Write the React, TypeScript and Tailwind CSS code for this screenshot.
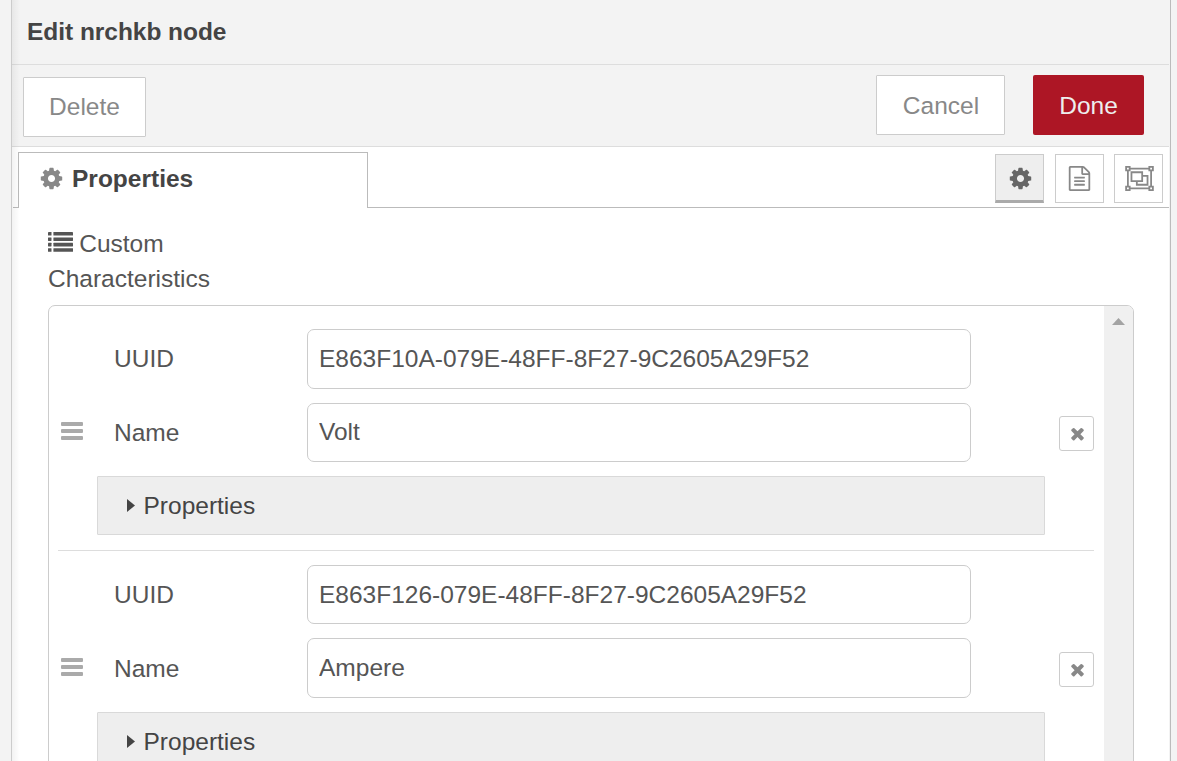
import React from "react";

type IconProps = { className?: string };

function CogIcon({ className }: IconProps) {
  return (
    <svg viewBox="0 0 1792 1792" fill="currentColor" className={className}>
      <path d="M1152 896q0-106-75-181t-181-75-181 75-75 181 75 181 181 75 181-75 75-181zm512-109v222q0 12-8 23t-20 13l-185 28q-19 54-39 91 35 50 107 138 10 12 10 25t-9 23q-27 37-99 108t-94 71q-12 0-26-9l-138-108q-44 23-91 38-16 136-29 186-7 28-36 28h-222q-14 0-24.500-8.500t-11.500-21.500l-28-184q-49-16-90-37l-141 107q-10 9-25 9-14 0-25-11-126-114-165-168-7-10-7-23 0-12 8-23 15-21 51-66.500t54-70.500q-27-50-41-99l-183-27q-13-2-21-12.500t-8-23.500v-222q0-12 8-23t19-13l186-28q14-46 39-92-40-57-107-138-10-12-10-24 0-10 9-23 26-36 98.500-107.500t94.500-71.500q13 0 26 10l138 107q44-23 91-38 16-136 29-186 7-28 36-28h222q14 0 24.500 8.500t11.500 21.500l28 184q49 16 90 37l142-107q9-9 24-9 13 0 25 10 129 119 165 170 7 8 7 22 0 12-8 23-15 21-51 66.500t-54 70.500q26 50 41 98l183 28q13 2 21 12.500t8 23.500z" />
    </svg>
  );
}

function FileTextIcon({ className }: IconProps) {
  return (
    <svg viewBox="0 0 1792 1792" fill="currentColor" className={className}>
      <path d="M1596 380q28 28 48 76t20 88v1152q0 40-28 68t-68 28h-1344q-40 0-68-28t-28-68v-1600q0-40 28-68t68-28h896q40 0 88 20t76 48zm-444-244v376h376q-10-29-22-41l-313-313q-12-12-41-22zm384 1528v-1024h-416q-40 0-68-28t-28-68v-416h-768v1536h1280zm-1024-864q0-14 9-23t23-9h704q14 0 23 9t9 23v64q0 14-9 23t-23 9h-704q-14 0-23-9t-9-23v-64zm736 224q14 0 23 9t9 23v64q0 14-9 23t-23 9h-704q-14 0-23-9t-9-23v-64q0-14 9-23t23-9h704zm0 256q14 0 23 9t9 23v64q0 14-9 23t-23 9h-704q-14 0-23-9t-9-23v-64q0-14 9-23t23-9h704z" />
    </svg>
  );
}

function ObjectGroupIcon({ className }: IconProps) {
  return (
    <svg viewBox="0 0 2048 1792" fill="none" stroke="currentColor" strokeWidth="128" className={className}>
      <path d="M320 192H1728M320 1600H1728M192 320V1472M1856 320V1472" />
      <path d="M64 64H320V320H64zM1728 64H1984V320H1728zM64 1472H320V1728H64zM1728 1472H1984V1728H1728z" />
      <path d="M448 448H1216V1088H448zM1216 704H1600V1344H832V1088" />
    </svg>
  );
}

function TimesIcon({ className }: IconProps) {
  return (
    <svg viewBox="0 0 1792 1792" fill="currentColor" className={className}>
      <path d="M1490 1322q0 40-28 68l-136 136q-28 28-68 28t-68-28l-294-294-294 294q-28 28-68 28t-68-28l-136-136q-28-28-28-68t28-68l294-294-294-294q-28-28-28-68t28-68l136-136q28-28 68-28t68 28l294 294 294-294q28-28 68-28t68 28l136 136q28 28 28 68t-28 68l-294 294 294 294q28 28 28 68z" />
    </svg>
  );
}

function ListIcon({ className }: IconProps) {
  return (
    <svg viewBox="0 0 25 20" fill="currentColor" className={className}>
      {[0, 5.4, 10.8, 16.2].map((y) => (
        <g key={y}>
          <rect x="0" y={y} width="3.5" height="3.6" rx="0.4" />
          <rect x="5.4" y={y} width="19.6" height="3.6" rx="0.4" />
        </g>
      ))}
    </svg>
  );
}

function BarsIcon({ className }: IconProps) {
  return (
    <svg viewBox="0 0 22 18" fill="currentColor" className={className}>
      <rect x="0" y="0" width="22" height="4" rx="1" />
      <rect x="0" y="7" width="22" height="4" rx="1" />
      <rect x="0" y="14" width="22" height="4" rx="1" />
    </svg>
  );
}

function Characteristic({ uuid, name, second }: { uuid: string; name: string; second?: boolean }) {
  return (
    <li
      className={
        second
          ? "flex h-[236px] items-start pt-[14px]"
          : "flex h-[236px] items-start border-b border-[#dddddd] pt-[14px]"
      }
    >
      <BarsIcon className="mt-[93px] ml-[3px] h-[18px] w-[22px] shrink-0 text-[#aaaaaa]" />
      <div className="ml-[14px] w-[948px] shrink-0">
        <label className="flex items-center">
          <span className={second ? "w-[210px] pl-[17px]" : "w-[210px] pb-[2px] pl-[17px]"}>UUID</span>
          <input
            readOnly
            defaultValue={uuid}
            className={
              second
                ? "h-[59px] w-[664px] rounded-[7px] border border-[#cccccc] px-[11px] outline-none"
                : "h-[60px] w-[664px] rounded-[7px] border border-[#cccccc] px-[11px] outline-none"
            }
          />
        </label>
        <label className="mt-[14px] flex items-center">
          <span className="w-[210px] pl-[17px]">Name</span>
          <input
            readOnly
            defaultValue={name}
            className={
              second
                ? "h-[60px] w-[664px] rounded-[7px] border border-[#cccccc] px-[11px] pb-[1px] outline-none"
                : "h-[59px] w-[664px] rounded-[7px] border border-[#cccccc] px-[11px] pb-[1px] outline-none"
            }
          />
        </label>
        <div className="mt-[14px] flex h-[59px] items-center rounded-[1px] border border-[#d9d9d9] bg-[#eeeeee] pl-[29px] text-[#444444]">
          <svg viewBox="0 0 8 13" fill="currentColor" className="h-[13px] w-2">
            <path d="M0 0L8 6.500L0 13z" />
          </svg>
          <span className="ml-[8.5px]">Properties</span>
        </div>
      </div>
      <button className="mt-[87px] ml-[14px] flex size-[35px] shrink-0 items-center justify-center rounded-[3px] border border-[#cccccc] bg-white pb-px pl-px text-[#888888]">
        <TimesIcon className="size-[19px]" />
      </button>
    </li>
  );
}

export default function App() {
  return (
    <div className="flex h-[761px] w-[1177px] overflow-hidden bg-[#f3f3f3] font-['Liberation_Sans',Arial,sans-serif] text-[24.5px] leading-[35px] text-[#555555]">
      <main className="relative ml-[11px] flex w-[1160px] shrink-0 flex-col border-r border-l border-r-[#bbbbbb] border-l-[#cccccc] bg-[#f3f3f3] pr-px">
        <div className="pointer-events-none absolute inset-y-0 left-0 w-2 bg-linear-to-r from-black/5 to-transparent" />
        <header className="flex h-[65px] shrink-0 items-center border-b border-[#dddddd] pb-px pl-[15px] font-bold tracking-[-0.04px] text-[#444444]">
          Edit nrchkb node
        </header>
        <div className="flex h-[82px] shrink-0 items-start border-b border-[#dddddd] pl-[11px]">
          <button className="mt-3 h-[60px] w-[123px] rounded-[1px] border border-[#cccccc] bg-white pb-[2px] text-[#888888]">Delete</button>
          <button className="mt-[10px] ml-[730px] h-[60px] w-[129px] rounded-[1px] border border-[#cccccc] bg-white pl-px text-[#888888]">Cancel</button>
          <button className="mt-[10px] ml-7 h-[60px] w-[111px] rounded-[2px] bg-[#ad1625] text-[#eeeeee]">Done</button>
        </div>
        <nav className="flex h-[61px] shrink-0 bg-white">
          <div className="ml-px h-full w-[5px] border-b border-[#bbbbbb]" />
          <div className="mt-[5px] flex h-[56px] w-[350px] items-start border border-b-0 border-[#bbbbbb] pl-5 font-bold text-[#444444]">
            <CogIcon className="mt-[13px] size-[25px] text-[#888888]" />
            <span className="ml-2 pt-2">Properties</span>
          </div>
          <div className="flex h-full flex-1 justify-end border-b border-[#bbbbbb] pt-[7px] pr-[6px]">
            <button className="flex size-[49px] items-center justify-center border border-b-[3px] border-[#cccccc] border-b-[#aaaaaa] bg-[#eeeeee] pt-[2px] pl-px text-[#666666]">
              <CogIcon className="size-[25px]" />
            </button>
            <button className="ml-[11px] flex size-[49px] items-center justify-center border border-[#cccccc] text-[#888888]">
              <FileTextIcon className="size-[25px]" />
            </button>
            <button className="ml-[10px] flex size-[49px] items-center justify-center border border-[#cccccc] pl-px text-[#888888]">
              <ObjectGroupIcon className="h-[25px] w-[29px]" />
            </button>
          </div>
        </nav>
        <section className="flex-1 bg-white pl-9">
          <h2 className="mt-[18px] w-[184px]">
            <ListIcon className="mr-[6.5px] ml-[-0.3px] inline-block h-5 w-[25px] align-[0px]" />
            Custom Characteristics
          </h2>
          <div className="mt-[9px] flex h-[600px] w-[1086px] overflow-hidden rounded-[7px] border border-[#cccccc]">
            <ol className="w-[1055px] shrink-0 px-[9px] pt-[9px] pr-[10px]">
              <Characteristic uuid="E863F10A-079E-48FF-8F27-9C2605A29F52" name="Volt" />
              <Characteristic uuid="E863F126-079E-48FF-8F27-9C2605A29F52" name="Ampere" second />
            </ol>
            <div className="flex flex-1 justify-center bg-[#f0f0f0] pt-3">
              <svg viewBox="0 0 13 7" fill="#a3a3a3" className="h-[7px] w-[13px]">
                <path d="M6.500 0L13 7H0z" />
              </svg>
            </div>
          </div>
        </section>
      </main>
    </div>
  );
}
